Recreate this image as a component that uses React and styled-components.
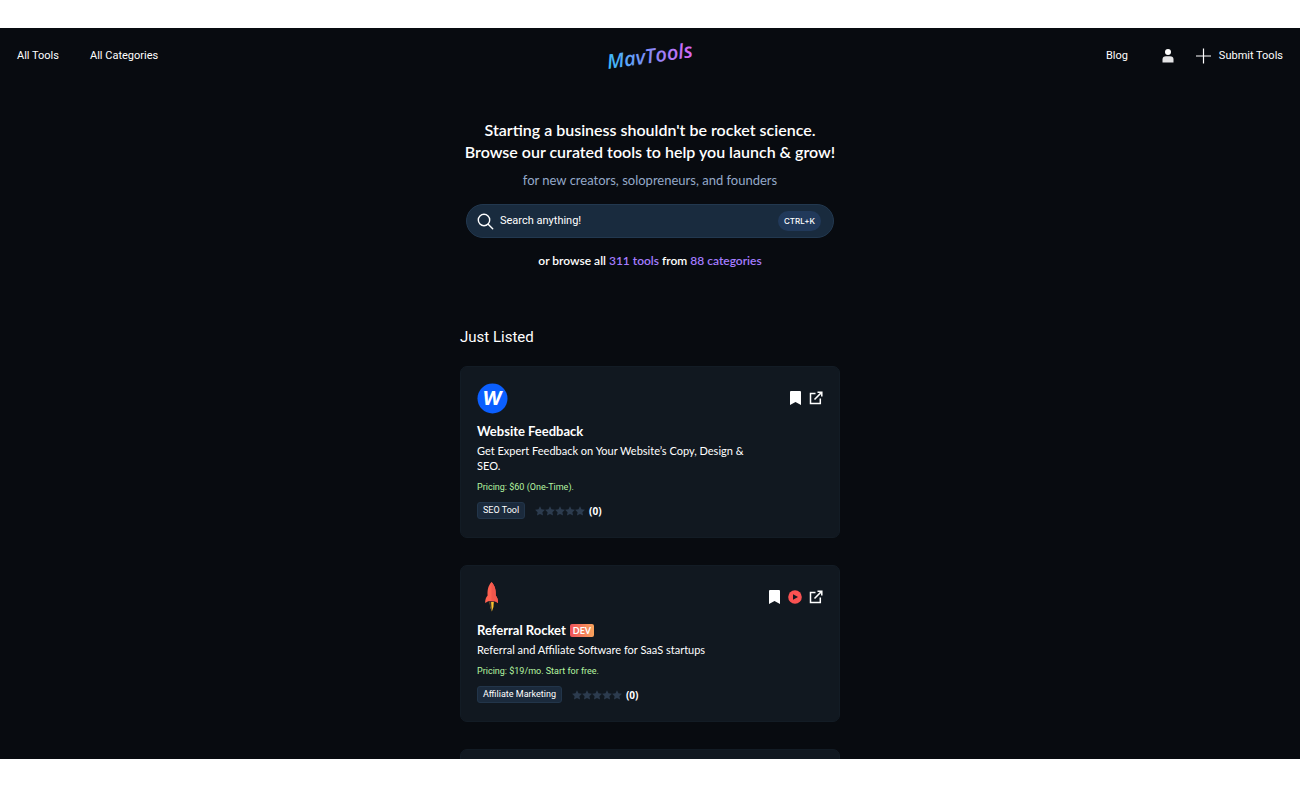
import React from "react";
import styled, { createGlobalStyle } from "styled-components";

const GlobalStyle = createGlobalStyle`
  *, *::before, *::after { box-sizing: border-box; }
  body { margin: 0; background: #fff; }
  h1, h2, h3, p, ul { margin: 0; padding: 0; }
  button, input { font: inherit; color: inherit; }
`;

const ui = `Roboto, "Liberation Sans", sans-serif`;
const display = `Lato, "Open Sans", sans-serif`;

const Viewport = styled.div`
  height: 100vh;
  padding: 28px 0 29px;
`;

const Page = styled.div`
  height: 100%;
  overflow: hidden;
  background: #080b10;
  color: #fff;
  font-family: ${ui};
`;

const Header = styled.header`
  display: grid;
  grid-template-columns: 1fr auto 1fr;
  align-items: center;
  height: 55px;
  padding: 0 17px;
`;

const NavGroup = styled.nav`
  display: flex;
  align-items: center;
  justify-content: ${(p) => (p.$end ? "flex-end" : "flex-start")};
  gap: ${(p) => (p.$end ? "34px" : "31px")};
`;

const NavLink = styled.a`
  display: inline-flex;
  align-items: center;
  gap: 8px;
  color: #fff;
  font-size: 11px;
  line-height: 16px;
  text-decoration: none;
`;

const RightLinks = styled.div`
  display: flex;
  align-items: center;
  gap: 22px;
`;

const Logo = styled.a`
  display: block;
  line-height: 0;
`;

const IconButton = styled.button`
  display: inline-flex;
  padding: 0;
  border: 0;
  background: none;
  cursor: pointer;
`;

const Main = styled.main`
  display: flex;
  flex-direction: column;
  align-items: center;
  padding-top: 36px;
`;

const Hero = styled.section`
  width: 100%;
  max-width: 380px;
  text-align: center;
`;

const Title = styled.h1`
  font: 600 16px/22px ${display};
  white-space: nowrap;
  display: flex;
  flex-direction: column;
  align-items: center;
`;

const Subtitle = styled.p`
  margin-top: 8px;
  color: #94a9c9;
  font: 400 13px/18px ${display};
`;

const SearchBar = styled.label`
  display: flex;
  align-items: center;
  gap: 6px;
  height: 34px;
  margin: 15px 6px 0;
  padding: 0 12px 0 10px;
  border: 1px solid #22384f;
  border-radius: 17px;
  background: #192b3e;
`;

const SearchInput = styled.input`
  flex: 1;
  min-width: 0;
  padding: 0;
  border: 0;
  outline: 0;
  background: none;
  font-size: 11px;
  line-height: 16px;
  &::placeholder { color: #fff; opacity: 1; }
`;

const Shortcut = styled.kbd`
  padding: 0 6px;
  border-radius: 10px;
  background: #21395a;
  font: 500 8px/20px Inter, sans-serif;
`;

const Browse = styled.p`
  margin-top: 15px;
  font: 600 12px/16px ${display};
`;

const Accent = styled.a`
  color: #a47cff;
  text-decoration: none;
`;

const Listing = styled.section`
  width: 100%;
  max-width: 380px;
  margin-top: 58px;
`;

const SectionTitle = styled.h2`
  font: 400 15px/20px ${ui};
`;

const Cards = styled.ul`
  display: flex;
  flex-direction: column;
  gap: 27px;
  margin-top: 19px;
  list-style: none;
`;

const Card = styled.li`
  padding: 16px 16px 18px;
  border: 1px solid #131c25;
  border-radius: 7px;
  background: #111820;
`;

const CardTop = styled.div`
  display: flex;
  align-items: center;
  justify-content: space-between;
  height: 30px;
`;

const Actions = styled.div`
  display: flex;
  align-items: center;
  gap: 7px;
  color: #fff;
`;

const ExternalLink = styled.a`
  display: inline-flex;
  color: inherit;
`;

const Name = styled.h3`
  display: flex;
  align-items: center;
  gap: 4px;
  margin-top: 8px;
  font: 700 13px/20px ${display};
`;

const Badge = styled.span`
  padding: 0 3px;
  border-radius: 2px;
  background: linear-gradient(90deg, #f0525a, #f9a35c);
  font: 700 9px/13px ${display};
`;

const Description = styled.p`
  max-width: 280px;
  margin-top: 2px;
  font: 400 11px/15px ${display};
`;

const Pricing = styled.p`
  margin-top: 7px;
  color: #b5f5a0;
  font: 400 9px/14px ${ui};
`;

const Meta = styled.div`
  display: flex;
  align-items: center;
  gap: 10px;
  margin-top: 8px;
`;

const Tag = styled.a`
  padding: 0 5px;
  border: 1px solid #22354a;
  border-radius: 3px;
  background: #1b2a3c;
  color: #fff;
  font: 400 9px/15px ${ui};
  text-decoration: none;
`;

const Rating = styled.span`
  display: inline-flex;
  align-items: center;
  font: 700 10px/14px "Open Sans", sans-serif;
`;

const Count = styled.span`
  margin-left: 4px;
`;

const BrandMark = () => (
  <svg width="92" height="46" viewBox="-4 -8 92 46" role="img" aria-label="MavTools">
    <defs>
      <linearGradient id="brand" gradientUnits="userSpaceOnUse" x1="0" y1="0" x2="84" y2="0">
        <stop offset="0" stopColor="#38bdf8" />
        <stop offset="0.5" stopColor="#818cf8" />
        <stop offset="1" stopColor="#d668f5" />
      </linearGradient>
    </defs>
    <text
      x="0"
      y="28"
      transform="rotate(-8 0 28)"
      fill="url(#brand)"
      fontFamily="Open Sans, sans-serif"
      fontStyle="italic"
      fontWeight="600"
      fontSize="20"
    >
      MavTools
    </text>
  </svg>
);

const UserIcon = () => (
  <svg width="12" height="14" viewBox="0 0 12 14" fill="#fff">
    <circle cx="6" cy="3" r="3" />
    <path d="M.5 13.500v-3Q.5 7.200 4 7.200h4q3.500 0 3.500 3.300v3z" fill="#e4e4e6" />
  </svg>
);

const PlusIcon = () => (
  <svg width="15" height="16" viewBox="0 0 15 16" stroke="#fff" strokeWidth="1.200">
    <path d="M7.500 .5v15M0 8h15" />
  </svg>
);

const SearchIcon = () => (
  <svg width="17" height="17" viewBox="0 0 17 17" fill="none" stroke="#fff" strokeWidth="1.400" strokeLinecap="round">
    <circle cx="7" cy="7" r="5.700" />
    <path d="M11.200 11.200 15.700 15.700" />
  </svg>
);

const BookmarkIcon = () => (
  <svg width="13" height="16" viewBox="0 0 13 16" fill="#fff">
    <path d="M1 2Q1 1 2 1h9Q12 1 12 2V15L6.500 12 1 15z" />
  </svg>
);

const PlayIcon = () => (
  <svg width="14" height="14" viewBox="0 0 14 14">
    <circle cx="7" cy="7" r="6.800" fill="#fa5252" />
    <path d="M5 4.200 10 7 5 9.800z" fill="#111820" />
  </svg>
);

const ExternalIcon = () => (
  <svg width="14" height="14" viewBox="0 0 14 14" fill="none" stroke="currentColor" strokeWidth="1.500">
    <path d="M6.500 2.500H1.500v10h9.800V7.500M8.500 1.200h4.300v4.300M12.600 1.400 5.500 8.500" />
  </svg>
);

const Star = () => (
  <svg width="10" height="10" viewBox="0 0 20 20" fill="#2c3b4e">
    <path d="M10 .3l3 6.300 6.900.9-5.100 4.800 1.300 6.900L10 15.900l-6.100 3.300 1.300-6.900L.1 7.500l6.900-.9z" />
  </svg>
);

const FeedbackLogo = () => (
  <svg width="31" height="31" viewBox="0 0 31 31" aria-hidden="true">
    <circle cx="15.500" cy="15.500" r="15" fill="#0b5fff" />
    <text
      x="15"
      y="22"
      textAnchor="middle"
      fill="#fff"
      fontFamily="Inter, sans-serif"
      fontSize="19"
      fontWeight="700"
      fontStyle="italic"
    >
      W
    </text>
  </svg>
);

const RocketLogo = () => (
  <svg width="30" height="30" viewBox="0 0 30 30" aria-hidden="true">
    <path d="M14.500 0C10.800 4 10.300 9 10.600 13.500Q8 16 8.200 21l3-1.800h6.800L21 21q.2-5-2.300-7.500C19 9 18.300 4 14.500 0z" fill="#ff6150" />
    <path d="M14.500 0c3.800 4 4.500 9 4.200 13.500Q21.200 16 21 21l-3-1.800h-3.500z" fill="#f2564c" />
    <path d="M12.600 20h4.200q.2 5-1.900 9.500Q12.500 25 12.600 20z" fill="#f9c22e" />
    <path d="M12.600 20h1.500l.8 9.500Q12.500 25 12.600 20z" fill="#3c3431" />
  </svg>
);

const tools = [
  {
    name: "Website Feedback",
    logo: <FeedbackLogo />,
    description: "Get Expert Feedback on Your Website’s Copy, Design & SEO.",
    pricing: "Pricing: $60 (One-Time).",
    tag: "SEO Tool",
  },
  {
    name: "Referral Rocket",
    logo: <RocketLogo />,
    badge: "DEV",
    video: true,
    description: "Referral and Affiliate Software for SaaS startups",
    pricing: "Pricing: $19/mo. Start for free.",
    tag: "Affiliate Marketing",
  },
];

const ToolCard = ({ tool }) => (
  <Card>
    <CardTop>
      {tool.logo}
      <Actions>
        <IconButton aria-label="Bookmark"><BookmarkIcon /></IconButton>
        {tool.video && <IconButton aria-label="Play video"><PlayIcon /></IconButton>}
        <ExternalLink href="#visit" aria-label="Visit website"><ExternalIcon /></ExternalLink>
      </Actions>
    </CardTop>
    <Name>
      {tool.name}
      {tool.badge && <Badge>{tool.badge}</Badge>}
    </Name>
    <Description>{tool.description}</Description>
    <Pricing>{tool.pricing}</Pricing>
    <Meta>
      <Tag href="#category">{tool.tag}</Tag>
      <Rating>
        {[0, 1, 2, 3, 4].map((n) => <Star key={n} />)}
        <Count>(0)</Count>
      </Rating>
    </Meta>
  </Card>
);

export default function App() {
  return (
    <Viewport>
      <GlobalStyle />
      <Page>
        <Header>
          <NavGroup>
            <NavLink href="#tools">All Tools</NavLink>
            <NavLink href="#categories">All Categories</NavLink>
          </NavGroup>
          <Logo href="#home"><BrandMark /></Logo>
          <NavGroup $end>
            <NavLink href="#blog">Blog</NavLink>
            <RightLinks>
              <IconButton aria-label="Account"><UserIcon /></IconButton>
              <NavLink href="#submit"><PlusIcon />Submit Tools</NavLink>
            </RightLinks>
          </NavGroup>
        </Header>
        <Main>
          <Hero>
            <Title>
              <span>Starting a business shouldn't be rocket science.</span>
              <span>Browse our curated tools to help you launch &amp; grow!</span>
            </Title>
            <Subtitle>for new creators, solopreneurs, and founders</Subtitle>
            <SearchBar>
              <SearchIcon />
              <SearchInput type="search" placeholder="Search anything!" aria-label="Search anything!" />
              <Shortcut>CTRL+K</Shortcut>
            </SearchBar>
            <Browse>
              or browse all <Accent href="#tools">311 tools</Accent> from{" "}
              <Accent href="#categories">88 categories</Accent>
            </Browse>
          </Hero>
          <Listing>
            <SectionTitle>Just Listed</SectionTitle>
            <Cards>
              {tools.map((tool) => <ToolCard key={tool.name} tool={tool} />)}
              <Card />
            </Cards>
          </Listing>
        </Main>
      </Page>
    </Viewport>
  );
}
